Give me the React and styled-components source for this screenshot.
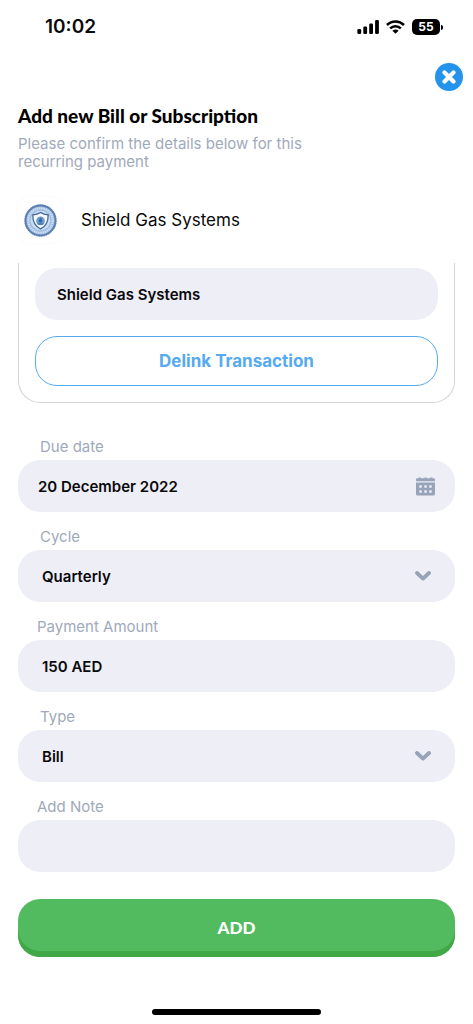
import styled, { createGlobalStyle } from "styled-components";

const GlobalStyle = createGlobalStyle`
  * {
    box-sizing: border-box;
  }

  body {
    margin: 0;
    background: #ffffff;
    color: #0a0a0c;
    font-family: "Inter", "Liberation Sans", sans-serif;
  }

  button, input, select {
    font-family: inherit;
    color: inherit;
  }
`;

const Screen = styled.div`
  display: flex;
  flex-direction: column;
  min-height: 100vh;
`;

const StatusBar = styled.header`
  display: flex;
  align-items: center;
  justify-content: space-between;
  height: 54px;
  padding: 0 30px 0 45px;
`;

const Clock = styled.span`
  font-size: 19px;
  font-weight: 600;
  line-height: 24px;
`;

const StatusIcons = styled.div`
  display: flex;
  align-items: center;
  gap: 7px;
`;

const Battery = styled.span`
  display: flex;
  align-items: center;
  gap: 1px;

  &::after {
    content: "";
    width: 2px;
    height: 5px;
    border-radius: 0 2px 2px 0;
    background: #000000;
  }
`;

const BatteryLevel = styled.span`
  width: 28px;
  border-radius: 5px;
  background: #000000;
  color: #ffffff;
  font-size: 12px;
  font-weight: 700;
  line-height: 16px;
  text-align: center;
`;

const TopBar = styled.div`
  display: flex;
  justify-content: flex-end;
  padding: 9px 10px 0;
`;

const CloseButton = styled.button`
  display: flex;
  align-items: center;
  justify-content: center;
  width: 28px;
  height: 28px;
  padding: 0;
  border: 0;
  border-radius: 50%;
  background: #2493ec;
  cursor: pointer;
`;

const Content = styled.main`
  display: flex;
  flex-direction: column;
  padding: 13px 18px 0;
`;

const Title = styled.h1`
  margin: 0;
  color: #000000;
  font-family: "Lato", "Liberation Sans", sans-serif;
  font-size: 19px;
  font-weight: 900;
  line-height: 24px;
`;

const Subtitle = styled.p`
  max-width: 310px;
  margin: 7px 0 0;
  color: #9fa9bb;
  font-size: 15px;
  font-weight: 400;
  line-height: 18px;
`;

const Merchant = styled.div`
  display: flex;
  align-items: center;
  gap: 18px;
  margin: 26px 0 20px;
`;

const LogoTile = styled.div`
  display: flex;
  align-items: center;
  justify-content: center;
  width: 45px;
  height: 46px;
  border-radius: 10px;
  box-shadow: 0 0 3px #f3f4f8;
`;

const MerchantName = styled.span`
  font-size: 17px;
  line-height: 22px;
`;

const LinkedCard = styled.section`
  display: flex;
  flex-direction: column;
  gap: 16px;
  margin-bottom: 33px;
  padding: 5px 16px 16px;
  border: 1px solid #d3d4d7;
  border-top: 0;
  border-radius: 0 0 22px 22px;
`;

const OutlineButton = styled.button`
  height: 50px;
  border: 1px solid #55aaf0;
  border-radius: 22px;
  background: #ffffff;
  color: #55aaf0;
  font-size: 17px;
  font-weight: 700;
  cursor: pointer;
`;

const Form = styled.form`
  display: flex;
  flex-direction: column;
  gap: 14px;
`;

const Field = styled.div`
  display: flex;
  flex-direction: column;
  gap: 2px;
`;

const Label = styled.label`
  padding-left: ${props => props.$indent}px;
  color: #9fa9bb;
  font-size: 15px;
  font-weight: 400;
  line-height: 22px;
`;

// input and icon share one grid cell, the icon sits at its right end
const Control = styled.div`
  display: grid;
  align-items: center;

  > * {
    grid-area: 1 / 1;
  }

  > svg {
    justify-self: end;
    margin-right: ${props => props.$iconGap}px;
    pointer-events: none;
  }
`;

const TextInput = styled.input`
  width: 100%;
  height: 52px;
  padding: 0 ${props => props.$pad || 24}px;
  border: 0;
  border-radius: 22px;
  background: #eeeef7;
  font-size: 15px;
  font-weight: 600;
  outline: 0;
`;

const Select = styled(TextInput).attrs({ as: "select" })`
  appearance: none;
`;

const AddButton = styled.button`
  height: 58px;
  margin-top: 13px;
  padding: 0 0 2px;
  border: 0;
  border-radius: 22px;
  background: #53bb5f;
  box-shadow: inset 0 -6px 0 #40a847;
  color: #ffffff;
  font-family: "Lato", "Liberation Sans", sans-serif;
  font-size: 17px;
  font-weight: 900;
  cursor: pointer;
`;

const HomeIndicator = styled.div`
  align-self: center;
  width: 169px;
  height: 6px;
  margin: auto 0 9px;
  border-radius: 3px;
  background: #000000;
`;

function SignalIcon() {
  return (
    <svg width="22" height="14" viewBox="0 0 22 14" aria-hidden="true">
      <rect x="0.4" y="9" width="3.8" height="5" rx="1.2" />
      <rect x="6.3" y="6.5" width="3.8" height="7.5" rx="1.2" />
      <rect x="12.2" y="3.5" width="3.8" height="10.5" rx="1.2" />
      <rect x="18.1" y="0" width="3.8" height="14" rx="1.2" />
    </svg>
  );
}

function WifiIcon() {
  return (
    <svg width="19" height="14" viewBox="0 0 19 14" aria-hidden="true">
      <g fill="none" stroke="#000" strokeWidth="2.5">
        <path d="M1 5 C5.8 0.3 13.2 0.3 18 5" />
        <path d="M4.1 8.4 C7.2 5.4 11.8 5.4 14.9 8.4" />
      </g>
      <path d="M6.4 10.7 C8.2 9.1 10.8 9.1 12.6 10.7 L9.5 13.8 Z" />
    </svg>
  );
}

function CrossIcon() {
  return (
    <svg width="14" height="14" viewBox="0 0 14 14" aria-hidden="true">
      <path d="M2.5 2.5 L11.5 11.5 M11.5 2.5 L2.5 11.5" stroke="#fff" strokeWidth="4.2" strokeLinecap="round" />
    </svg>
  );
}

function ShieldLogo() {
  return (
    <svg width="33" height="33" viewBox="0 0 34 34" role="img" aria-label="Shield Gas Systems logo">
      <circle cx="17" cy="17" r="15.4" fill="#a3c0e3" stroke="#5b7fb0" strokeWidth="2" />
      <circle cx="17" cy="17" r="16.3" fill="none" stroke="#5b7fb0" strokeWidth="0.8" strokeDasharray="1.6 1" />
      <circle cx="17" cy="17" r="12.6" fill="none" stroke="#d3e2f4" strokeWidth="2" strokeDasharray="1.4 0.9" />
      <circle cx="17" cy="17" r="10.6" fill="#c9def3" stroke="#8fb0d8" strokeWidth="0.6" />
      <path d="M17 8.8 C14.4 10.5 12 11.1 9.1 11.2 C8.9 18.4 11.4 23 17 25.8 C22.6 23 25.1 18.4 24.9 11.2 C22 11.1 19.6 10.5 17 8.8 Z" fill="#f4f9ff" stroke="#41638f" strokeWidth="1.3" />
      <circle cx="17" cy="17.4" r="4.5" fill="#6e9dce" />
      <path d="M17 13.6 C18.7 15.8 19.2 16.9 18.7 18.3 C18.2 19.5 15.8 19.5 15.3 18.3 C14.8 16.9 15.3 15.8 17 13.6 Z" fill="#3d6ca4" />
      <path d="M14 20.6 H20" stroke="#3d6ca4" strokeWidth="1.2" />
    </svg>
  );
}

function CalendarIcon() {
  return (
    <svg width="19" height="19" viewBox="0 0 19 19" fill="#97a3b8" aria-hidden="true">
      <path d="M0 4.3 V2.6 Q0 1.3 1.3 1.3 H2.6 V0.4 H4.8 V1.3 H8.4 V0.4 H10.6 V1.3 H14.2 V0.4 H16.4 V1.3 H17.7 Q19 1.3 19 2.6 V4.3 Z" />
      <path d="M0 5.6 H19 V16.9 Q19 18.6 17.3 18.6 H1.7 Q0 18.6 0 16.9 Z" />
      <g fill="#eeeef7">
        <rect x="3.3" y="8.2" width="2.5" height="2.5" rx="0.4" />
        <rect x="8.3" y="8.2" width="2.5" height="2.5" rx="0.4" />
        <rect x="13.2" y="8.2" width="2.5" height="2.5" rx="0.4" />
        <rect x="3.3" y="13.3" width="2.5" height="2.5" rx="0.4" />
        <rect x="8.3" y="13.3" width="2.5" height="2.5" rx="0.4" />
        <rect x="13.2" y="13.3" width="2.5" height="2.5" rx="0.4" />
      </g>
    </svg>
  );
}

function ChevronIcon() {
  return (
    <svg width="16" height="10" viewBox="0 0 16 10" aria-hidden="true">
      <path d="M2 2 L8 7.6 L14 2" fill="none" stroke="#97a3b8" strokeWidth="3.8" strokeLinecap="round" strokeLinejoin="round" />
    </svg>
  );
}

function App() {
  return (
    <Screen>
      <GlobalStyle />

      <StatusBar>
        <Clock>10:02</Clock>
        <StatusIcons>
          <SignalIcon />
          <WifiIcon />
          <Battery>
            <BatteryLevel>55</BatteryLevel>
          </Battery>
        </StatusIcons>
      </StatusBar>

      <TopBar>
        <CloseButton type="button" aria-label="Close">
          <CrossIcon />
        </CloseButton>
      </TopBar>

      <Content>
        <Title>Add new Bill or Subscription</Title>
        <Subtitle>Please confirm the details below for this recurring payment</Subtitle>

        <Merchant>
          <LogoTile>
            <ShieldLogo />
          </LogoTile>
          <MerchantName>Shield Gas Systems</MerchantName>
        </Merchant>

        <LinkedCard>
          <TextInput aria-label="Linked transaction" $pad={22} defaultValue="Shield Gas Systems" />
          <OutlineButton type="button">Delink Transaction</OutlineButton>
        </LinkedCard>

        <Form onSubmit={e => e.preventDefault()}>
          <Field>
            <Label htmlFor="due" $indent={22}>Due date</Label>
            <Control $iconGap={20}>
              <TextInput id="due" $pad={20} defaultValue="20 December 2022" />
              <CalendarIcon />
            </Control>
          </Field>

          <Field>
            <Label htmlFor="cycle" $indent={22}>Cycle</Label>
            <Control $iconGap={24}>
              <Select id="cycle" defaultValue="Quarterly">
                <option>Monthly</option>
                <option>Quarterly</option>
                <option>Yearly</option>
              </Select>
              <ChevronIcon />
            </Control>
          </Field>

          <Field>
            <Label htmlFor="amount" $indent={19}>Payment Amount</Label>
            <TextInput id="amount" defaultValue="150 AED" />
          </Field>

          <Field>
            <Label htmlFor="type" $indent={22}>Type</Label>
            <Control $iconGap={24}>
              <Select id="type" defaultValue="Bill">
                <option>Bill</option>
                <option>Subscription</option>
              </Select>
              <ChevronIcon />
            </Control>
          </Field>

          <Field>
            <Label htmlFor="note" $indent={19}>Add Note</Label>
            <TextInput id="note" />
          </Field>

          <AddButton type="submit">ADD</AddButton>
        </Form>
      </Content>

      <HomeIndicator />
    </Screen>
  );
}

export default App;
